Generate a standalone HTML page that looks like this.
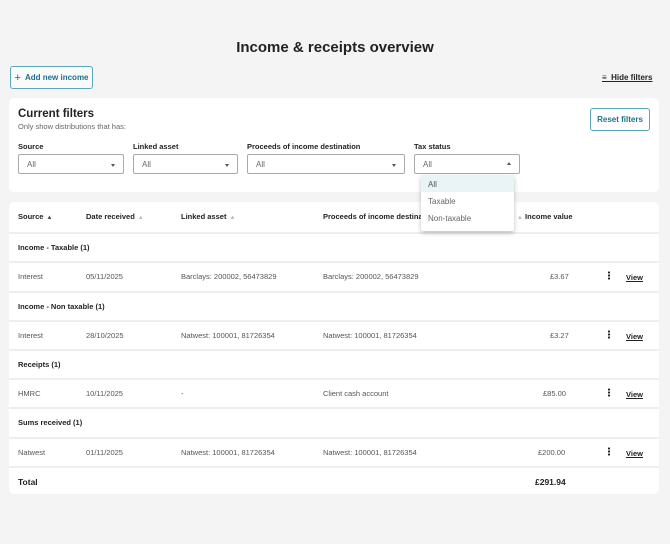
<!DOCTYPE html>
<html><head><style>
*{box-sizing:border-box;margin:0;padding:0}
body{width:670px;height:544px;background:#f4f4f5;font-family:"Liberation Sans",sans-serif;color:#222;position:relative;overflow:hidden;font-size:8px}
.a{position:absolute}
h1{position:absolute;top:39px;left:0;width:670px;text-align:center;font-size:15px;font-weight:bold;color:#222}
.btn{position:absolute;border:1px solid #5aa7bd;border-radius:3px;color:#1e6f8c;font-weight:bold;font-size:8px;display:flex;align-items:center;justify-content:center;background:#fafafa}
.card{position:absolute;background:#fff;border-radius:5px}
.lbl{position:absolute;font-weight:bold;font-size:7.5px;color:#222}
.sel{position:absolute;height:20px;border:1px solid #aaa;border-radius:2px;background:#fff;font-size:8px;color:#666;padding:5px 8px}
.sel:after{content:"";position:absolute;right:8px;top:9px;border:2.5px solid transparent;border-top:3px solid #555}
.sel.up:after{border-top:2.5px solid transparent;border-bottom:3px solid #555;top:5px}
.row{position:absolute;left:9px;width:650px;border-top:2px solid #eeeeef;height:29px}
.row span{position:absolute;top:9px;font-size:7.5px;color:#555}
.row b{position:absolute;top:9px;font-size:7.5px}
.dots{position:absolute;left:599px;top:8px;width:2px;height:9px;background:radial-gradient(circle,#222 1px,transparent 1.2px) 0 0/2px 3px}
.view{position:absolute;left:617px;top:10px!important;font-weight:bold;text-decoration:underline;color:#222!important;font-size:7.5px}
.th{position:absolute;top:212px;font-weight:bold;font-size:7.5px}
.ar{color:#bbb;font-size:6px;margin-left:3px}
</style></head><body>
<h1>Income &amp; receipts overview</h1>
<div class="btn" style="left:10px;top:66px;width:83px;height:23px"><span style="font-size:11px;font-weight:normal;margin-right:4px">+</span>Add new income</div>
<div class="a" style="left:602px;top:73px;font-weight:bold;text-decoration:underline;font-size:8px">≡&nbsp; Hide filters</div>
<div class="card" style="left:9px;top:98px;width:650px;height:94px"></div>
<div class="a" style="left:18px;top:108px;font-size:11.5px;font-weight:bold">Current filters</div>
<div class="a" style="left:18px;top:122px;font-size:7.5px;color:#666">Only show distributions that has:</div>
<div class="btn" style="left:590px;top:108px;width:60px;height:23px;background:#fff">Reset filters</div>
<div class="lbl" style="left:18px;top:142px">Source</div>
<div class="lbl" style="left:133px;top:142px">Linked asset</div>
<div class="lbl" style="left:247px;top:142px">Proceeds of income destination</div>
<div class="lbl" style="left:414px;top:142px">Tax status</div>
<div class="sel" style="left:18px;top:154px;width:106px">All</div>
<div class="sel" style="left:133px;top:154px;width:105px">All</div>
<div class="sel" style="left:247px;top:154px;width:158px">All</div>
<div class="sel up" style="left:414px;top:154px;width:106px">All</div>
<div class="card" style="left:9px;top:202px;width:650px;height:292px"></div>
<div class="th" style="left:18px">Source<span class="ar" style="color:#444">▲</span></div>
<div class="th" style="left:86px">Date received<span class="ar">▲</span></div>
<div class="th" style="left:181px">Linked asset<span class="ar">▲</span></div>
<div class="th" style="left:323px">Proceeds of income destination</div>
<div class="th" style="left:514px"><span class="ar">▲</span> Income value</div>
<div class="row" style="top:232px"><b style="left:9px">Income - Taxable (1)</b></div>
<div class="row" style="top:261px"><span style="left:9px">Interest</span><span style="left:77px">05/11/2025</span><span style="left:172px">Barclays: 200002, 56473829</span><span style="left:314px">Barclays: 200002, 56473829</span><span style="left:541px">£3.67</span><i class="dots"></i><span class="view">View</span></div>
<div class="row" style="top:291px"><b style="left:9px">Income - Non taxable (1)</b></div>
<div class="row" style="top:320px"><span style="left:9px">Interest</span><span style="left:77px">28/10/2025</span><span style="left:172px">Natwest: 100001, 81726354</span><span style="left:314px">Natwest: 100001, 81726354</span><span style="left:541px">£3.27</span><i class="dots"></i><span class="view">View</span></div>
<div class="row" style="top:349px"><b style="left:9px">Receipts (1)</b></div>
<div class="row" style="top:378px"><span style="left:9px">HMRC</span><span style="left:77px">10/11/2025</span><span style="left:172px">-</span><span style="left:314px">Client cash account</span><span style="left:534px">£85.00</span><i class="dots"></i><span class="view">View</span></div>
<div class="row" style="top:407px"><b style="left:9px">Sums received (1)</b></div>
<div class="row" style="top:437px"><span style="left:9px">Natwest</span><span style="left:77px">01/11/2025</span><span style="left:172px">Natwest: 100001, 81726354</span><span style="left:314px">Natwest: 100001, 81726354</span><span style="left:529px">£200.00</span><i class="dots"></i><span class="view">View</span></div>
<div class="row" style="top:466px"><b style="left:9px;font-size:8.5px">Total</b><b style="left:526px;font-size:8.5px">£291.94</b></div>
<div class="a" style="left:421px;top:175px;width:93px;height:56px;background:#fff;border-radius:2px;box-shadow:0 2px 5px rgba(0,0,0,.25)">
<div style="background:#eaf3f6;height:17px;padding:5px 7px;color:#555">All</div>
<div style="height:17px;padding:5px 7px;color:#666">Taxable</div>
<div style="height:17px;padding:5px 7px;color:#666">Non-taxable</div>
</div>
</body></html>
